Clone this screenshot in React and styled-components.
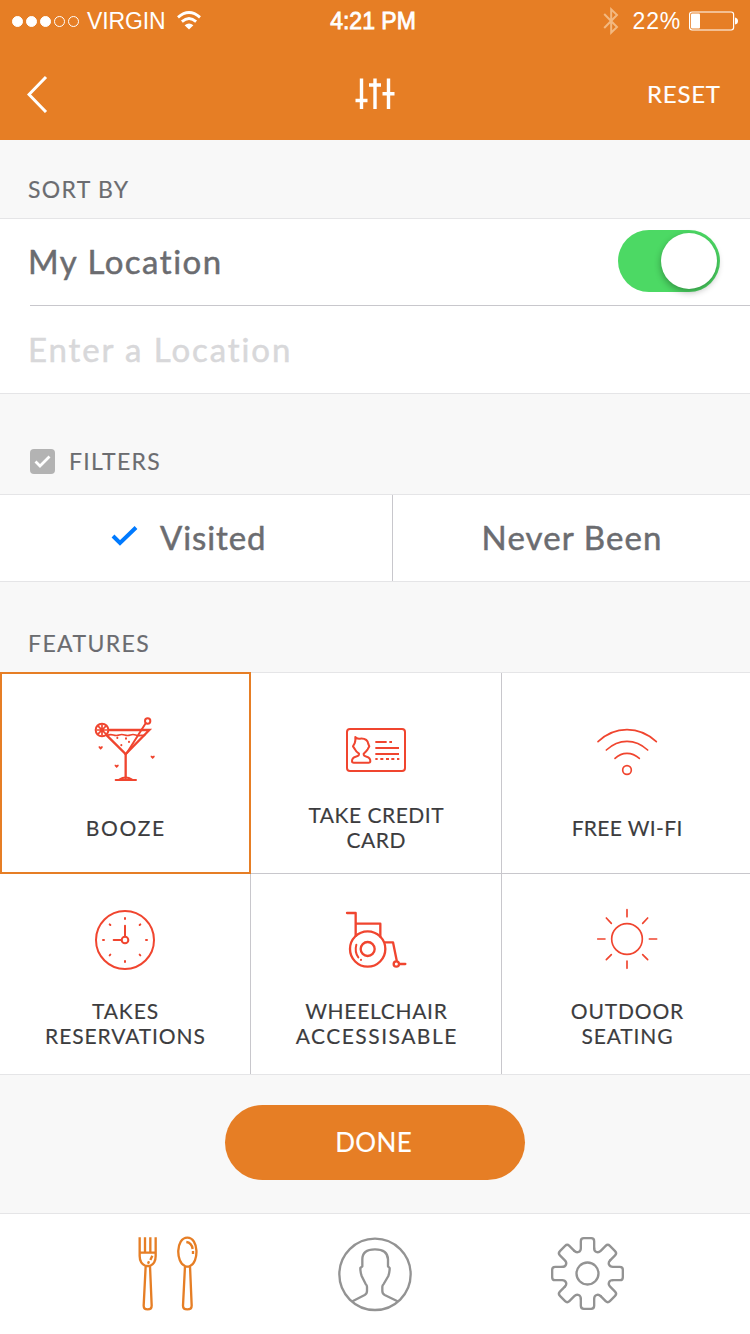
import React from "react";
import styled, { createGlobalStyle } from "styled-components";

const ORANGE = "#e67e25";
const RED = "#f0452f";

const GlobalStyle = createGlobalStyle`
  * { box-sizing: border-box; }
  body { margin: 0; background: #f8f8f8; font-family: Lato, "Liberation Sans", sans-serif; }
`;

const Screen = styled.div`
  width: 750px;
  height: 1334px;
  overflow: hidden;
  display: flex;
  flex-direction: column;
  background: #f8f8f8;
`;

const Text = styled.span`
  display: block;
  white-space: nowrap;
  font-size: ${(p) => p.$size}px;
  line-height: ${(p) => p.$line || p.$size + 4}px;
  letter-spacing: ${(p) => p.$track || 0}px;
  margin-right: ${(p) => -(p.$track || 0)}px;
  color: ${(p) => p.$color || "#6b6c70"};
  -webkit-text-stroke: ${(p) => (p.$size > 30 ? 0.5 : 0.15)}px currentColor;
`;

const Header = styled.header`
  height: 140px;
  flex: none;
  background: ${ORANGE};
  color: #fff;
`;

const StatusBar = styled.div`
  height: 40px;
  padding: 1px 12px 0 12px;
  display: grid;
  grid-template-columns: 1fr auto 1fr;
  align-items: center;
  font: 23px/40px "Liberation Sans", sans-serif;
`;

const StatusGroup = styled.div`
  display: flex;
  align-items: center;
  justify-content: ${(p) => (p.$end ? "flex-end" : "flex-start")};
`;

const Dots = styled.div`
  display: flex;
  gap: 3px;
  margin-right: 8px;
`;

const Dot = styled.i`
  width: 11px;
  height: 11px;
  border-radius: 50%;
  border: 1px solid #fff;
  background: ${(p) => (p.$on ? "#fff" : "transparent")};
`;

const Carrier = styled.span`
  letter-spacing: -0.1px;
  margin-right: 11px;
`;

const Clock = styled.span`
  -webkit-text-stroke: 0.8px #fff;
  margin-right: 4px;
`;

const Percent = styled.span`
  margin: 0 8px 0 14px;
  letter-spacing: 0.8px;
`;

const NavBar = styled.div`
  height: 100px;
  padding: 8px 30px 0 27px;
  display: grid;
  grid-template-columns: 1fr auto 1fr;
  align-items: center;
`;

const Reset = styled.div`
  justify-self: end;
`;

const SectionHead = styled.div`
  height: ${(p) => p.$height}px;
  padding: 0 28px ${(p) => p.$bottom}px;
  display: flex;
  align-items: flex-end;
  gap: 14px;
  flex: none;
`;

const Panel = styled.div`
  background: #fff;
  border-top: 1px solid #e5e5e7;
  border-bottom: 1px solid #e5e5e7;
  flex: none;
`;

const LocationRow = styled.div`
  height: 87px;
  margin-left: ${(p) => (p.$divided ? 30 : 0)}px;
  padding: ${(p) => (p.$divided ? "0 30px 2px 0" : "0 30px 0 28px")};
  display: flex;
  align-items: center;
  justify-content: space-between;
  border-bottom: ${(p) => (p.$divided ? "1px solid #c8c7cc" : "none")};
`;

const LocationName = styled(Text)`
  margin-left: -2px;
`;

const Toggle = styled.div`
  width: 102px;
  height: 62px;
  padding: 3px;
  border-radius: 31px;
  background: #4cd964;
  display: flex;
  justify-content: flex-end;
`;

const Knob = styled.div`
  width: 56px;
  height: 56px;
  border-radius: 50%;
  background: #fff;
  box-shadow: 0 3px 7px rgba(0, 0, 0, 0.32);
`;

const CheckBox = styled.div`
  width: 25px;
  height: 25px;
  margin: 0 0 1px 2px;
  border-radius: 4px;
  background: #b3b3b3;
  display: flex;
`;

const Segments = styled(Panel)`
  display: grid;
  grid-template-columns: 393px 1fr;
  height: 88px;
`;

const Segment = styled.div`
  display: flex;
  align-items: center;
  justify-content: ${(p) => (p.$checked ? "flex-start" : "center")};
  gap: 22px;
  padding: 0 0 2px ${(p) => (p.$checked ? 111 : 0)}px;
  border-right: ${(p) => (p.$checked ? "1px solid #c8c7cc" : "none")};
`;

const FeatureGrid = styled(Panel)`
  height: 403px;
  display: grid;
  grid-template-columns: repeat(3, 251px);
  grid-template-rows: 201px 200px;
`;

const Feature = styled.div`
  display: flex;
  flex-direction: column;
  align-items: center;
  gap: ${(p) => (p.$row === 0 ? 7 : 13)}px;
  border-right: 1px solid #c8c7cc;
  border-bottom: ${(p) => (p.$row === 0 ? "1px solid #c8c7cc" : "none")};
  outline: ${(p) => (p.$selected ? `2px solid ${ORANGE}` : "none")};
  outline-offset: -2px;
  margin: ${(p) => (p.$selected ? "-1px 0 0 0" : "0")};
  padding: ${(p) => (p.$selected ? 33 : p.$row === 0 ? 32 : 21)}px 0 0;
`;

const FeatureLabel = styled.div`
  height: 50px;
  display: flex;
  flex-direction: column;
  align-items: center;
  justify-content: center;
`;

const DoneArea = styled.div`
  height: 138px;
  padding-top: 30px;
  display: flex;
  justify-content: center;
  flex: none;
`;

const DoneButton = styled.button`
  width: 300px;
  height: 75px;
  padding: 0 3px 1px 0;
  border: 0;
  border-radius: 38px;
  background: ${ORANGE};
  font-family: inherit;
  display: flex;
  align-items: center;
  justify-content: center;
`;

const TabBar = styled.nav`
  flex: 1;
  background: #fff;
  border-top: 1px solid #e5e5e7;
  padding: 6px 0 0 125px;
  display: flex;
  gap: 110px;
`;

const LineIcon = styled.svg`
  display: block;
  flex: none;
  fill: none;
  stroke: ${(p) => p.$color || RED};
  stroke-width: ${(p) => p.$weight || 6};
  stroke-linecap: ${(p) => p.$cap || "round"};
  stroke-linejoin: round;
`;

const Art = ({ shift = 0, weight, children }) => (
  <LineIcon width="90" height="90" viewBox={`${shift} 0 270 270`} $weight={weight}>
    {children}
  </LineIcon>
);

const Heart = ({ x, y }) => (
  <path d={`M${x} ${y + 6}l-6-6v-4h4l2 2 2-2h4v4z`} fill={RED} stroke="none" />
);

const Cocktail = () => (
  <Art>
    <circle cx="66" cy="75" r="19" />
    <path d="M66 60v30M51 75h30M56 65l20 20M76 65L56 85" strokeWidth="5" />
    <path d="M87 75H208L137 147L81 92" strokeLinejoin="miter" strokeWidth="7" />
    <path d="M82 91q9-4 18-1t17 0 17 0 17 0 16 0 16 1H194" strokeWidth="5" />
    <path d="M137 148V219" strokeWidth="7" />
    <path d="M107 225H168M118 224q19-13 38 0" strokeWidth="6" />
    <path d="M141 143L197 55" />
    <circle cx="203" cy="48" r="8" />
    <path d="M112 98v1M138 100v1M147 110v1M124 120v1" />
    <Heart x={62} y={128} />
    <Heart x={110} y={183} />
    <Heart x={218} y={156} />
  </Art>
);

const CreditCard = () => (
  <Art shift={3}>
    <rect x="51" y="72" width="174" height="126" rx="9" />
    <path d="M76 96Q79 102 90 101Q112 99 115 117L118 124L113 133Q109 139 101 146Q100 153 110 155Q121 158 121 168Q121 173 116 173H71Q66 173 66 168Q66 158 77 155Q88 153 87 146Q78 140 75 133L69 124L74 115Q77 107 76 96Z" />
    <path d="M136 111h34M178 111h8M136 129h71M136 147h71" strokeLinecap="butt" />
    <path d="M136 162h7M151 162h9M168 162h9M184 162h9M201 162h7" strokeLinecap="butt" />
  </Art>
);

const FreeWifi = () => (
  <Art weight={5}>
    <path d="M48 110Q86 74 135 74T223 110M73 135Q101 109 135 109T197 135M99 160Q115 145 135 145T172 160" />
    <circle cx="135" cy="195" r="13" />
  </Art>
);

const ClockIcon = () => (
  <Art>
    <circle cx="135" cy="135" r="87" />
    <circle cx="135" cy="135" r="10" />
    <path d="M135 92v31M101 135h23" />
    <path d="M135 69v3M135 198v3M69 135h3M198 135h3M89 88l2 2M181 88l-2 2M89 181l2-2M181 181l-2-2" />
  </Art>
);

const Wheelchair = () => (
  <Art shift={3}>
    <circle cx="113" cy="162" r="53" strokeWidth="7" />
    <circle cx="113" cy="162" r="21" strokeWidth="7" />
    <path d="M51 54H77V122M78 86H151V125M165 142H189L200 196M210 207H226" strokeWidth="7" />
    <circle cx="199" cy="207" r="8" strokeWidth="7" />
    <path d="M79 149Q73 171 85 187M93 194v1" />
  </Art>
);

const Sun = () => (
  <Art weight={5}>
    <circle cx="135" cy="132" r="46" />
    <path d="M135 44v21M135 198v22M47 132h22M202 132h22M73 69l15 16M197 69l-15 16M73 194l15-15M197 194l-15-15" />
  </Art>
);

const GEAR_TOOTH =
  "M-39.6-67.9C-32-60-20-64-20-76V-97Q-20-106-11-106H11Q20-106 20-97V-76";

const FEATURES = [
  { icon: Cocktail, lines: [["BOOZE", 1.7]], selected: true },
  { icon: CreditCard, lines: [["TAKE CREDIT", 0.5], ["CARD", 0.5]] },
  { icon: FreeWifi, lines: [["FREE WI-FI", 0.35]] },
  { icon: ClockIcon, lines: [["TAKES", 0.9], ["RESERVATIONS", 0.9]] },
  { icon: Wheelchair, lines: [["WHEELCHAIR", 0.7], ["ACCESSISABLE", 1.5]] },
  { icon: Sun, lines: [["OUTDOOR", 0.85], ["SEATING", 0.85]] },
];

export default function App() {
  return (
    <Screen>
      <GlobalStyle />
      <Header>
        <StatusBar>
          <StatusGroup>
            <Dots>
              {[1, 1, 1, 0, 0].map((on, i) => (
                <Dot key={i} $on={on} />
              ))}
            </Dots>
            <Carrier>VIRGIN</Carrier>
            <svg width="24" height="20" viewBox="0 0 24 20" fill="none" stroke="#fff" strokeWidth="2.8">
              <path d="M1 6.4Q12-3.4 23 6.4M4.9 10.6Q12 4.4 19.1 10.6" />
              <path d="M12 18.6L7.6 14.2Q12 10.6 16.4 14.2Z" fill="#fff" stroke="none" />
            </svg>
          </StatusGroup>
          <Clock>4:21 PM</Clock>
          <StatusGroup $end>
            <svg width="16" height="28" viewBox="0 0 16 28" fill="none" stroke="#f3b981" strokeWidth="2">
              <path d="M1.2 7L14 20L8.2 25.6V2.4L14 8L1.2 21" />
            </svg>
            <Percent>22%</Percent>
            <svg width="49" height="20" viewBox="0 0 49 20">
              <rect x="0.6" y="1" width="44" height="18" rx="2.4" fill="none" stroke="#fff" strokeWidth="1.2" />
              <rect x="2" y="2.6" width="9" height="15" rx="1" fill="#fff" />
              <path d="M46 6.5Q49 7 49 10T46 13.5Z" fill="#fff" />
            </svg>
          </StatusGroup>
        </StatusBar>
        <NavBar>
          <svg width="21" height="38" viewBox="0 0 21 38" fill="none" stroke="#fff" strokeWidth="3">
            <path d="M19 2L2 19.5L19 37" />
          </svg>
          <svg width="42" height="32" viewBox="-1 0 42 32" fill="none" stroke="#fff" strokeWidth="3.4">
            <path d="M7.5 0.5V31M21 0.5V31M34.5 0.5V31" />
            <path d="M1.5 22.5H13.5M15 7H27M28.5 15.8H40.5" />
          </svg>
          <Reset>
            <Text $size={24} $color="#fff" $track={0.75}>RESET</Text>
          </Reset>
        </NavBar>
      </Header>

      <SectionHead $height={78} $bottom={15}>
        <Text $size={23} $track={1.3}>SORT BY</Text>
      </SectionHead>
      <Panel>
        <LocationRow $divided>
          <LocationName $size={33} $track={1.5}>My Location</LocationName>
          <Toggle>
            <Knob />
          </Toggle>
        </LocationRow>
        <LocationRow>
          <Text $size={33} $track={1.9} $color="#d8d8da">Enter a Location</Text>
        </LocationRow>
      </Panel>

      <SectionHead $height={100} $bottom={19}>
        <CheckBox>
          <svg width="25" height="25" viewBox="0 0 25 25" fill="none" stroke="#fff" strokeWidth="2.8">
            <path d="M5.5 12.5L10 17L19.5 7.5" />
          </svg>
        </CheckBox>
        <Text $size={23} $track={1.3}>FILTERS</Text>
      </SectionHead>
      <Segments>
        <Segment $checked>
          <svg width="27" height="24" viewBox="0 0 27 24" fill="none" stroke="#007aff" strokeWidth="4">
            <path d="M2 11L9 18L25 2.5" />
          </svg>
          <Text $size={33} $track={0.9}>Visited</Text>
        </Segment>
        <Segment>
          <Text $size={33} $track={1.1}>Never Been</Text>
        </Segment>
      </Segments>

      <SectionHead $height={90} $bottom={15}>
        <Text $size={23} $track={1.4}>FEATURES</Text>
      </SectionHead>
      <FeatureGrid>
        {FEATURES.map(({ icon: Icon, lines, selected }, i) => (
          <Feature key={i} $row={i < 3 ? 0 : 1} $selected={selected}>
            <Icon />
            <FeatureLabel>
              {lines.map(([text, track]) => (
                <Text key={text} $size={21} $line={25} $track={track} $color="#3c3c3e">
                  {text}
                </Text>
              ))}
            </FeatureLabel>
          </Feature>
        ))}
      </FeatureGrid>

      <DoneArea>
        <DoneButton>
          <Text $size={26} $color="#fff" $track={0.4}>DONE</Text>
        </DoneButton>
      </DoneArea>

      <TabBar>
        <LineIcon width="90" height="110" viewBox="0 0 270 330" $color={ORANGE} $weight={7} $cap="butt">
          <path d="M44 52V108Q44 130 62 138L56 257Q56 268 68 268T80 257L75 138Q92 130 92 108V52M60 52V98M76 52V98M44 98H92M60 138H77" />
          <path d="M82 107L76 120M72 124L69 131" />
          <path d="M180 138C152 128 152 53 187 53S222 128 195 138M180 138L174 257Q174 268 187 268T200 257L195 138Q187 142 180 138" />
          <path d="M184 66Q200 68 203 87M204 93V102" />
        </LineIcon>
        <LineIcon width="100" height="110" viewBox="0 0 300 330" $color="#939393" $weight={7}>
          <circle cx="150" cy="163" r="107" />
          <path d="M84 243L119 225Q126 221 126 213V200Q126 196 122 192L110 168Q106 157 106 144L112 139V118Q112 88 150 88T189 118V139L194 144Q194 157 190 168L176 192Q172 196 172 200V213Q172 221 179 225L216 243" />
        </LineIcon>
        <LineIcon width="105" height="110" viewBox="630 0 315 330" $color="#939393" $weight={7}>
          <g transform="translate(787.5 160.5)">
            <circle r="33" />
            {[0, 1, 2, 3, 4, 5, 6, 7].map((n) => (
              <path key={n} d={GEAR_TOOTH} transform={`rotate(${n * 45})`} />
            ))}
          </g>
        </LineIcon>
      </TabBar>
    </Screen>
  );
}
